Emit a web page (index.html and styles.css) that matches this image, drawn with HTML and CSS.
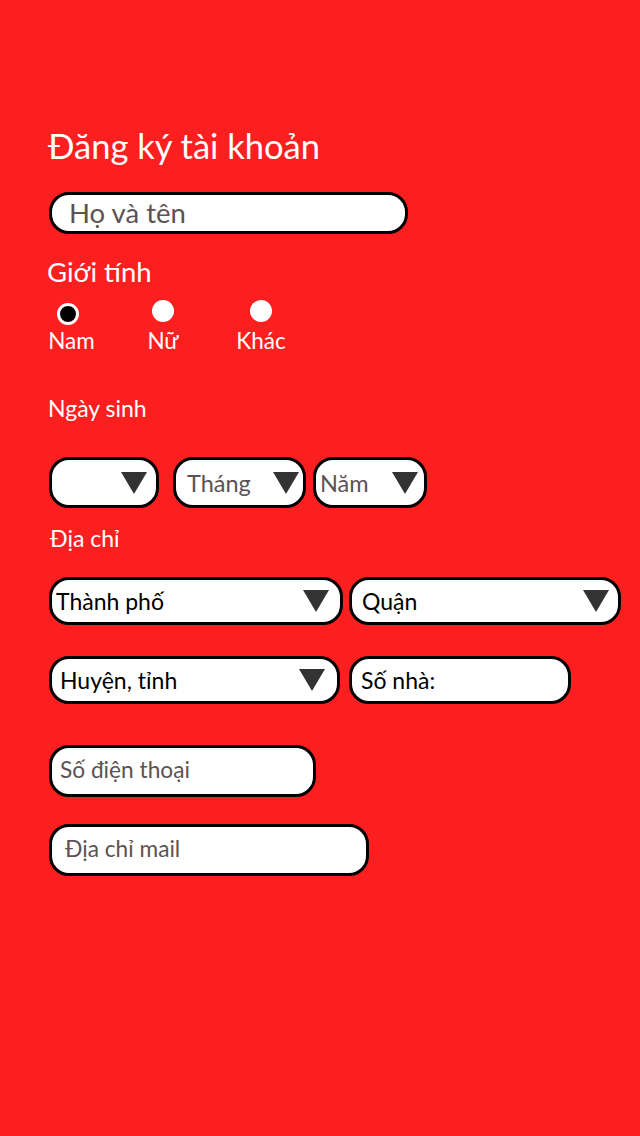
FILE: index.html
```html
<!DOCTYPE html>
<html lang="vi">
<head>
<meta charset="utf-8">
<title>Đăng ký tài khoản</title>
<link rel="stylesheet" href="styles.css">
</head>
<body>
<main class="form">
  <h1 class="title">Đăng ký tài khoản</h1>

  <div class="box box-name"><span class="ph">Họ và tên</span></div>

  <div class="label label-gender">Giới tính</div>
  <div class="radios">
    <div class="radio-item">
      <span class="dot dot-on"></span>
      <span class="radio-text">Nam</span>
    </div>
    <div class="radio-item">
      <span class="dot"></span>
      <span class="radio-text">Nữ</span>
    </div>
    <div class="radio-item radio-item-last">
      <span class="dot"></span>
      <span class="radio-text">Khác</span>
    </div>
  </div>

  <div class="label label-small label-birth">Ngày sinh</div>
  <div class="row row-date">
    <div class="box sel sel-day"><span class="ph"></span><span class="tri"></span></div>
    <div class="box sel sel-month"><span class="ph">Tháng</span><span class="tri"></span></div>
    <div class="box sel sel-year"><span class="ph">Năm</span><span class="tri"></span></div>
  </div>

  <div class="label label-small label-addr">Địa chỉ</div>
  <div class="row row-addr1">
    <div class="box sel sel-city"><span class="val">Thành phố</span><span class="tri"></span></div>
    <div class="box sel sel-district"><span class="val">Quận</span><span class="tri"></span></div>
  </div>
  <div class="row row-addr2">
    <div class="box sel sel-ward"><span class="val">Huyện, tỉnh</span><span class="tri"></span></div>
    <div class="box sel sel-house"><span class="val">Số nhà:</span></div>
  </div>

  <div class="box box-phone"><span class="ph">Số điện thoại</span></div>
  <div class="box box-mail"><span class="ph">Địa chỉ mail</span></div>
</main>
</body>
</html>
```

FILE: styles.css
```css
html, body {
  margin: 0;
  padding: 0;
}
body {
  background: #fc1f20;
  width: 640px;
  min-height: 1136px;
  font-family: "Lato", "Open Sans", sans-serif;
  color: #fff;
}
.form {
  display: flex;
  flex-direction: column;
  align-items: flex-start;
  padding: 124px 0 0 49px;
}
.title {
  margin: 0 0 0 -1px;
  font-size: 34.5px;
  font-weight: 400;
  line-height: 44px;
  height: 44px;
}
.box {
  box-sizing: border-box;
  background: #fff;
  border: 3px solid #000;
  border-radius: 20px;
  display: flex;
  align-items: center;
}
.ph {
  color: #5c5253;
}
.val {
  color: #000;
}
.box-name {
  margin-top: 24px;
  width: 359px;
  height: 42px;
  padding-left: 17px;
  padding-bottom: 1px;
  font-size: 27.5px;
}
.label {
  font-size: 27.5px;
  line-height: 32px;
}
.label-gender {
  margin-top: 22px;
  margin-left: -2px;
}
.radios {
  display: flex;
  gap: 35px;
  margin-left: -11px;
  margin-top: 12px;
}
.radio-item {
  width: 60px;
  display: flex;
  flex-direction: column;
  align-items: center;
}
.radio-item-last {
  margin-left: 3px;
}
.dot {
  width: 22px;
  height: 22px;
  border-radius: 50%;
  background: #fff;
  box-sizing: border-box;
}
.dot-on {
  background: #000;
  border: 3px solid #fff;
  margin-top: 3px;
  margin-bottom: -3px;
}
.radio-text {
  font-size: 22.5px;
  line-height: 26px;
  margin-top: 6px;
}
.radio-item:first-child .radio-text {
  margin-left: 7px;
}
.label-small {
  font-size: 23px;
  line-height: 24px;
}
.label-birth {
  margin-top: 42px;
  margin-left: -1px;
}
.row {
  display: flex;
}
.row-date {
  margin-top: 37px;
}
.sel {
  height: 51px;
  font-size: 23.5px;
  justify-content: space-between;
}
.tri {
  width: 0;
  height: 0;
  border-left: 13px solid transparent;
  border-right: 13px solid transparent;
  border-top: 22px solid #333;
}
.sel-day {
  width: 110px;
  padding-right: 9px;
}
.sel-month {
  width: 133px;
  margin-left: 14px;
  padding-left: 11px;
  padding-right: 4px;
}
.sel-year {
  width: 114px;
  margin-left: 7px;
  padding-left: 4px;
  padding-right: 6px;
}
.label-addr {
  margin-top: 18px;
  margin-left: 1px;
}
.row-addr1 {
  margin-top: 27px;
  gap: 6px;
}
.row-addr1 .sel,
.row-addr2 .sel {
  height: 48px;
  font-size: 23px;
}
.sel-city {
  width: 294px;
  padding-left: 4px;
  padding-right: 11px;
}
.sel-district {
  width: 272px;
  padding-left: 10px;
  padding-right: 9px;
}
.row-addr2 {
  margin-top: 31px;
  gap: 9px;
}
.sel-ward {
  width: 291px;
  padding-left: 8px;
  padding-right: 12px;
}
.sel-house {
  width: 222px;
  padding-left: 9px;
}
.box-phone {
  margin-top: 41px;
  width: 267px;
  height: 52px;
  padding-left: 8px;
  padding-bottom: 4px;
  font-size: 22.7px;
}
.box-mail {
  margin-top: 27px;
  width: 320px;
  height: 52px;
  padding-left: 13px;
  padding-bottom: 4px;
  font-size: 22.7px;
}
```
